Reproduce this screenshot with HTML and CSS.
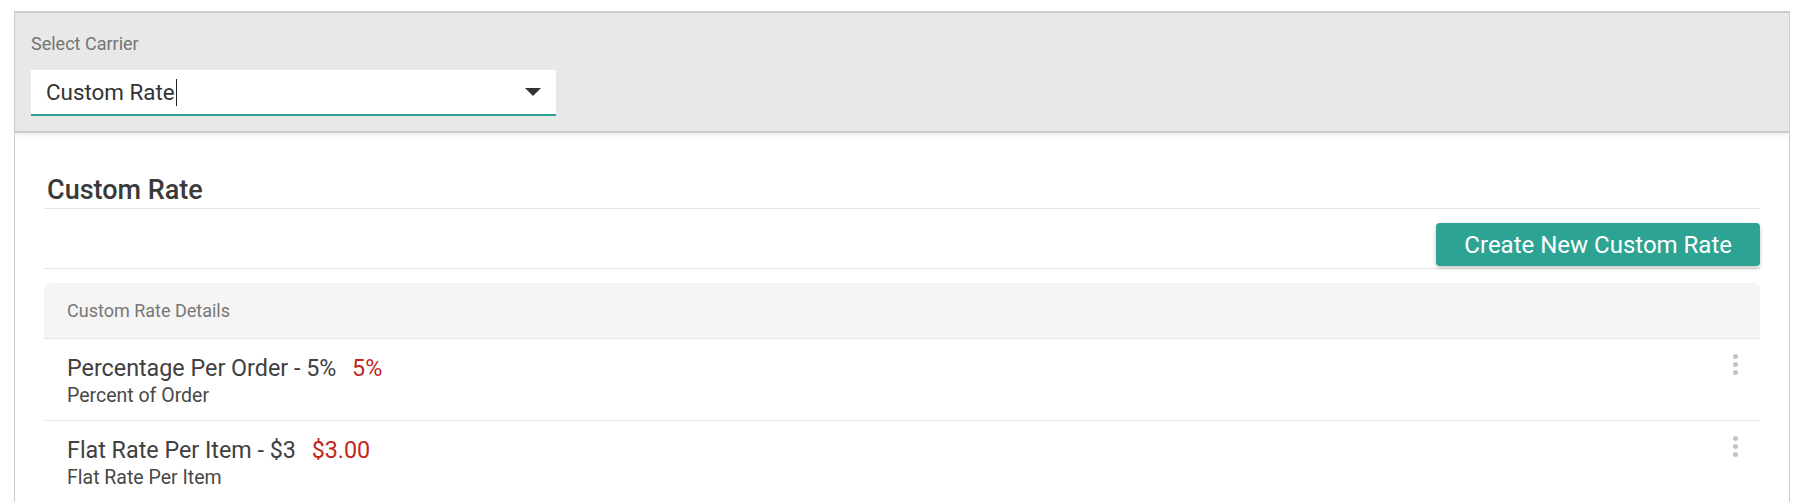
FILE: index.html
```html
<!DOCTYPE html>
<html>
<head>
<meta charset="utf-8">
<link rel="stylesheet" href="styles.css">
</head>
<body>
<div class="frame">
  <div class="carrier">
    <div class="carrier-label">Select Carrier</div>
    <div class="select">
      <span class="select-value">Custom Rate</span><span class="caret"></span>
      <span class="select-arrow"></span>
    </div>
  </div>
  <div class="content">
    <h2 class="title">Custom Rate</h2>
    <div class="actions">
      <button class="btn">Create New Custom Rate</button>
    </div>
    <div class="table">
      <div class="table-head">Custom Rate Details</div>
      <div class="row">
        <div class="row-text">
          <div class="row-title">Percentage Per Order - 5% <span class="amount">5%</span></div>
          <div class="row-sub">Percent of Order</div>
        </div>
        <div class="kebab"><i></i><i></i><i></i></div>
      </div>
      <div class="row">
        <div class="row-text">
          <div class="row-title">Flat Rate Per Item - $3 <span class="amount">$3.00</span></div>
          <div class="row-sub">Flat Rate Per Item</div>
        </div>
        <div class="kebab"><i></i><i></i><i></i></div>
      </div>
    </div>
  </div>
</div>
</body>
</html>
```

FILE: styles.css
```css
* { box-sizing: border-box; }
html, body { margin: 0; padding: 0; background: #fff; }
body { font-family: Roboto, "Liberation Sans", Arial, sans-serif; color: #333; }

.frame {
  margin: 11px 16px 0 14px;
  border: 1px solid #cccccc;
  border-top-width: 2px;
  border-bottom: none;
  height: 491px;
  overflow: hidden;
}

.carrier {
  background: #e8e8e8;
  padding: 21px 16px 15px 16px;
  border-bottom: 2px solid #cbcbcb;
  box-shadow: 0 2px 6px rgba(0,0,0,0.08);
  position: relative;
}
.carrier-label {
  font-size: 18px;
  line-height: 20px;
  color: #747474;
}
.select {
  margin-top: 16px;
  width: 525px;
  height: 46px;
  background: #fff;
  border-bottom: 2px solid #2ba092;
  display: flex;
  align-items: center;
  padding: 0 15px 0 15px;
}
.select-value {
  font-size: 22.4px;
  color: #333;
}
.caret {
  width: 1px;
  height: 27px;
  background: #222;
  margin-left: 1px;
}
.select-arrow {
  margin-left: auto;
  width: 0;
  height: 0;
  border-left: 8px solid transparent;
  border-right: 8px solid transparent;
  border-top: 8px solid #333;
}

.content {
  padding: 0 29px 0 29px;
}
.title {
  margin: 0;
  padding: 41px 0 2px 3px;
  font-size: 27px;
  line-height: 32px;
  font-weight: 500;
  color: #3a3a3a;
  border-bottom: 1px solid #e4e4e4;
}
.actions {
  display: flex;
  justify-content: flex-end;
  padding: 14px 0 2px;
  border-bottom: 1px solid #e4e4e4;
}
.btn {
  font-family: inherit;
  font-size: 24px;
  color: #fff;
  background: #2da394;
  border: none;
  border-radius: 4px;
  height: 43px;
  padding: 0 28px;
  box-shadow: 0 2px 4px rgba(0,0,0,0.22);
}

.table {
  margin-top: 14px;
}
.table-head {
  background: #f5f5f5;
  border-radius: 6px 6px 0 0;
  height: 56px;
  padding-left: 23px;
  display: flex;
  align-items: center;
  font-size: 18px;
  color: #777;
  border-bottom: 1px solid #e6e6e6;
}
.row {
  display: flex;
  justify-content: space-between;
  padding: 16px 22px 12px 23px;
  border-bottom: 1px solid #eaeaea;
}
.row-title {
  font-size: 23.3px;
  line-height: 27px;
  color: #404040;
}
.amount {
  color: #c0281c;
  margin-left: 10px;
}
.row-sub {
  font-size: 19.5px;
  line-height: 24px;
  color: #484848;
  margin-top: 2px;
}
.kebab {
  display: flex;
  flex-direction: column;
  gap: 3px;
  padding-top: 0;
  margin-top: -1px;
  width: 5px;
}
.kebab i {
  display: block;
  width: 5px;
  height: 5px;
  border-radius: 50%;
  background: #c4c4c4;
}
```
